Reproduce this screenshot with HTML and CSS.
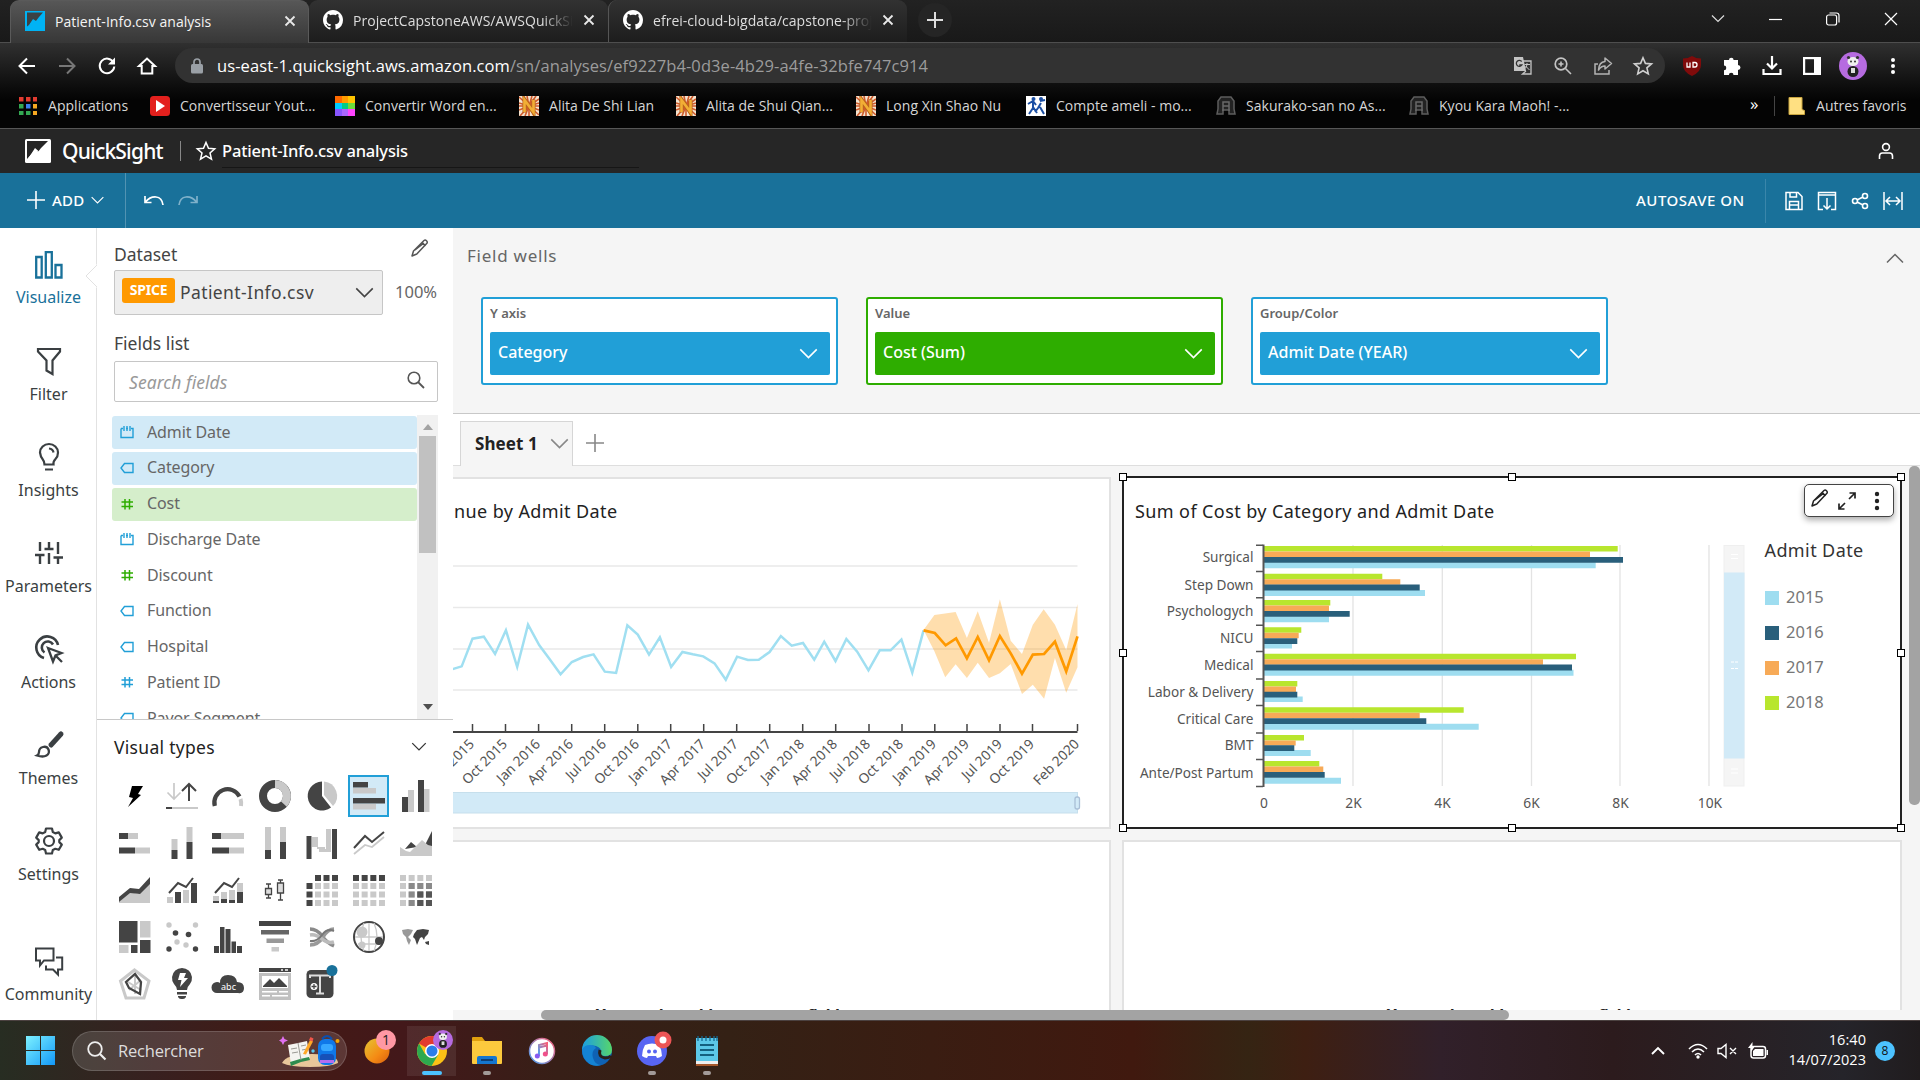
FILE: index.html
```html
<!DOCTYPE html>
<html lang="en">
<head>
<meta charset="utf-8">
<title>Patient-Info.csv analysis</title>
<link rel="stylesheet" href="styles.css">
</head>
<body>
<svg class="sprite" width="0" height="0" aria-hidden="true">
  <symbol id="close" viewBox="0 0 12 12"><path d="M1.5 1.5l9 9M10.500 1.500l-9 9" fill="none" stroke="currentColor" stroke-width="1.8"/></symbol>
  <symbol id="github" viewBox="0 0 16 16"><path fill="#fff" d="M8 0C3.580 0 0 3.580 0 8c0 3.540 2.290 6.530 5.470 7.590.4.070.550-.170.550-.380 0-.190-.010-.820-.010-1.490-2.010.370-2.530-.490-2.690-.940-.090-.230-.480-.940-.820-1.130-.280-.150-.680-.520-.010-.530.630-.010 1.080.580 1.230.820.720 1.210 1.870.870 2.330.660.070-.520.280-.870.510-1.070-1.780-.2-3.640-.890-3.640-3.950 0-.870.310-1.590.820-2.150-.080-.2-.360-1.020.080-2.120 0 0 .670-.210 2.200.820.640-.180 1.320-.270 2-.270s1.360.090 2 .270c1.530-1.040 2.200-.820 2.200-.820.440 1.100.160 1.920.080 2.120.510.560.820 1.270.820 2.150 0 3.070-1.870 3.750-3.650 3.950.290.250.540.730.540 1.480 0 1.070-.010 1.930-.010 2.200 0 .210.150.460.550.380A8 8 0 0 0 16 8c0-4.420-3.580-8-8-8z"/></symbol>
  <symbol id="chev" viewBox="0 0 20 12"><path d="M1 1.500l9 9 9-9" fill="none" stroke="currentColor" stroke-width="1.700"/></symbol>
  <symbol id="pencil" viewBox="0 0 18 18"><path d="M1 17l1.500-5L13 1.500q1.200-1 2.500.2t.4 2.600L5.800 15 1 17zM11 3.500l3.500 3.500M4 11l9-7" fill="none" stroke="currentColor" stroke-width="1.500" stroke-linejoin="round"/></symbol>
  <symbol id="f-date" viewBox="0 0 14 14"><path d="M1 3.500h2M11 3.500h2V12.500H1V3.500M6 3.500h2M4 1v5M7 1v5M10 1v5" fill="none" stroke="currentColor" stroke-width="1.400"/></symbol>
  <symbol id="f-text" viewBox="0 0 14 14"><path d="M4.500 2.500H13v9H4.500L1 7z" fill="none" stroke="currentColor" stroke-width="1.400"/></symbol>
  <symbol id="f-num" viewBox="0 0 14 14"><path d="M5 2v10.500M9.500 2v10.500M1.500 5h11.500M1.500 9.500h11.500" fill="none" stroke="currentColor" stroke-width="1.500"/></symbol>
  <symbol id="novel" viewBox="0 0 20 20"><path fill="#f3e3cf" d="M0 0h20v20H0z"/><path stroke="#cf5a2c" stroke-width="1.600" d="M10 10L0 1M10 10L4 0M10 10L8 0M10 10l3-10M10 10l7-10M10 10L20 3M10 10L0 7M10 10H0M10 10L0 14M10 10L1 20M10 10L6 20M10 10v10M10 10l5 10M10 10l10 9M10 10l10 4M10 10h10M10 10l10-3"/><path d="M5.500 16.500v-13l9 13v-13" fill="none" stroke="#b7641a" stroke-width="4"/><path d="M5.500 16v-12l9 12v-12" fill="none" stroke="#f2ae35" stroke-width="2.600"/></symbol>
  <symbol id="anime" viewBox="0 0 20 20"><path d="M5 1h10l3 4v8l1 5h-6v-4H7v4H1l1-5V5z" fill="#222" stroke="#5d5d5d" stroke-width="1.500"/><path d="M7 15V6h6v9M7 10h6" fill="none" stroke="#686868" stroke-width="1.500"/></symbol>
  <symbol id="panda" viewBox="0 0 28 28"><circle cx="14" cy="14" r="14" fill="#b66be0"/><ellipse cx="14" cy="19.500" rx="5.500" ry="5.500" fill="#222"/><ellipse cx="14" cy="9.500" rx="5.500" ry="4.500" fill="#eee"/><circle cx="9.500" cy="5.500" r="1.600" fill="#333"/><circle cx="18.500" cy="5.500" r="1.600" fill="#333"/><circle cx="12" cy="9.500" r="1" fill="#333"/><circle cx="16" cy="9.500" r="1" fill="#333"/><path d="M12 16h4v5h-4z" fill="#ddd"/></symbol>
</svg>

<header class="browser">
  <div class="tabstrip">
    <div class="tab tab-active">
      <svg width="20" height="20"><path fill="#00b3f4" d="M0 0h20v20H0z"/><path fill="#3b4245" d="M2 1.500h16L14 6l-3 4-3-2-4 6-2 1.500z"/><path fill="#00b3f4" d="M4 15l4-6 2.500 2 5-5-4 7-3-1.500z"/></svg>
      <span class="tab-title">Patient-Info.csv analysis</span>
      <svg class="x" width="12" height="12"><use href="#close"/></svg>
    </div>
    <div class="tab">
      <svg width="20" height="20"><use href="#github"/></svg>
      <span class="tab-title faded">ProjectCapstoneAWS/AWSQuickSight</span>
      <svg class="x" width="12" height="12"><use href="#close"/></svg>
    </div>
    <div class="tab tab-sep">
      <svg width="20" height="20"><use href="#github"/></svg>
      <span class="tab-title faded">efrei-cloud-bigdata/capstone-project</span>
      <svg class="x" width="12" height="12"><use href="#close"/></svg>
    </div>
    <div class="newtab"><svg width="16" height="16"><path d="M8 0v16M0 8h16" stroke="#ddd" stroke-width="2"/></svg></div>
    <div class="winctl">
      <svg width="14" height="10"><path d="M1 1.500l6 6 6-6" fill="none" stroke="#ddd" stroke-width="1.200"/></svg>
      <svg width="13" height="10"><path d="M0 5.500h13" stroke="#fff" stroke-width="1.200"/></svg>
      <svg width="14" height="14"><rect x=".6" y="3" width="10" height="10" rx="2" fill="none" stroke="#fff" stroke-width="1.200"/><path d="M3.500 1h7q2.500 0 2.500 2.500v7" fill="none" stroke="#fff" stroke-width="1.200"/></svg>
      <svg width="14" height="14"><path d="M1 1l12 12M13 1L1 13" stroke="#fff" stroke-width="1.200"/></svg>
    </div>
  </div>
  <div class="navbar">
    <div class="navbtns">
      <svg width="18" height="18"><path d="M17 9H2M9 1.500L1.500 9 9 16.500" fill="none" stroke="#fff" stroke-width="2"/></svg>
      <svg width="18" height="18"><path d="M1 9h15M9 1.500L16.500 9 9 16.500" fill="none" stroke="#777" stroke-width="2"/></svg>
      <svg width="18" height="18"><path d="M15.500 5.500A7.300 7.300 0 1 0 16.300 9.500" fill="none" stroke="#fff" stroke-width="2"/><path d="M17 .5v7h-7z" fill="#fff"/></svg>
      <svg width="18" height="18"><path d="M1 9l8-7.500L17 9h-2.700v7.500H3.700V9z" fill="none" stroke="#fff" stroke-width="2"/></svg>
    </div>
    <div class="omnibox">
      <svg width="12" height="16"><rect x="0" y="6" width="12" height="9.500" rx="1.500" fill="#9aa0a6"/><path d="M3 6.500V4a3 3 0 0 1 6 0v2.500" fill="none" stroke="#9aa0a6" stroke-width="1.700"/></svg>
      <p class="url">us-east-1.quicksight.aws.amazon.com<span>/sn/analyses/ef9227b4-0d3e-4b29-a4fe-32bfe747c914</span></p>
      <div class="omni-icons">
        <svg width="20" height="20"><path d="M1 1h9l3 14H1z" fill="#c4c4c4"/><path d="M10 5h8v13H9.500l3.500-3" fill="none" stroke="#c4c4c4" stroke-width="1.300"/><path d="M8.700 5.500a3 3 0 1 0 .2 3.500H6.300" fill="none" stroke="#333" stroke-width="1.300"/><path d="M11.500 8.500H17M14 7v1.500q-.5 3-2 4M12.500 10l4 4" stroke="#c4c4c4" fill="none"/></svg>
        <svg width="20" height="20"><circle cx="8" cy="8" r="5.800" fill="none" stroke="#c4c4c4" stroke-width="1.700"/><path d="M12.500 12.500L18 18M8 5.500v5M5.500 8h5" stroke="#c4c4c4" stroke-width="1.600"/></svg>
        <svg width="20" height="20"><path d="M5 8H2v10h14v-4" fill="none" stroke="#b4b4b4" stroke-width="1.500"/><path d="M12 2l6.500 5.500L12 13v-3q-4 0-6.500 4Q6 6 12 5.500z" fill="none" stroke="#b4b4b4" stroke-width="1.500" stroke-linejoin="round"/></svg>
        <svg width="20" height="20"><path d="M10 1.800l2.400 5.600 6.100.5-4.600 4 1.400 6L10 14.700 4.700 17.900l1.400-6-4.600-4 6.100-.5z" fill="none" stroke="#d0d0d0" stroke-width="1.600"/></svg>
      </div>
    </div>
    <div class="ext">
      <svg width="20" height="20"><path d="M10 0q4 2.500 9 2.500V9q0 7-9 11Q1 16 1 9V2.500Q6 2.500 10 0z" fill="#800b0b"/><path d="M5 6.500v4.500h3V6.500M11 6.500h2q2 0 2 2.200T13 11h-2z" fill="none" stroke="#fff" stroke-width="1.300"/></svg>
      <svg width="20" height="20"><path d="M7 4a2.300 2.300 0 0 1 4.600 0H16v5a2.400 2.400 0 0 1 0 5v5h-4.500a2.300 2.300 0 0 0-4.600 0H2v-4.800a2.300 2.300 0 0 0 0-4.600V4z" fill="#fff"/></svg>
      <svg width="20" height="20"><path d="M10 0v12M5 7.500l5 5 5-5M1.500 13v5h17v-5" fill="none" stroke="#fff" stroke-width="2.200"/></svg>
      <svg width="20" height="20"><rect x="2.100" y="2.100" width="15.800" height="15.800" fill="none" stroke="#fff" stroke-width="2.200"/><path fill="#fff" d="M12 2h6v16h-6z"/></svg>
      <svg width="28" height="28"><use href="#panda"/></svg>
      <svg width="20" height="20"><g fill="#fff"><circle cx="9" cy="4" r="2"/><circle cx="9" cy="10" r="2"/><circle cx="9" cy="16" r="2"/></g></svg>
    </div>
  </div>
  <nav class="bookmarks">
    <a><svg width="20" height="20"><path fill="#e23b30" d="M1 1h4.500v4.500H1zM8 1h4.500v4.500H8zM15 1h4v4.500h-4z"/><path fill="#33a852" d="M1 8h4.500v4.500H1zM1 15h4.500v4H1zM8 15h4.500v4H8z"/><path fill="#3a7ff0" d="M8 8h4.500v4.500H8z"/><path fill="#f6a821" d="M15 8h4v4.500h-4zM15 15h4v4h-4z"/></svg>Applications</a>
    <a><svg width="20" height="20"><rect width="20" height="20" rx="3.500" fill="#e3201d"/><path fill="#fff" d="M6 4l9 6-9 6z"/></svg>Convertisseur Yout...</a>
    <a><svg width="20" height="20"><path fill="#ff6a00" d="M0 0h7v7H0z"/><path fill="#ff9b00" d="M7 0h6v7H7z"/><path fill="#ffc400" d="M13 0h7v7h-7z"/><path fill="#0cf" d="M0 7h7v6H0z"/><path fill="#0c8" d="M7 7h6v6H7z"/><path fill="#6bdc3c" d="M13 7h7v6h-7z"/><path fill="#85f" d="M0 13h7v7H0z"/><path fill="#a6f" d="M7 13h6v7H7z"/><path fill="#f4f" d="M13 13h7v7h-7z"/></svg>Convertir Word en...</a>
    <a><svg width="20" height="20"><use href="#novel"/></svg>Alita De Shi Lian</a>
    <a><svg width="20" height="20"><use href="#novel"/></svg>Alita de Shui Qian...</a>
    <a><svg width="20" height="20"><use href="#novel"/></svg>Long Xin Shao Nu</a>
    <a><svg width="20" height="20"><path fill="#fff" d="M0 0h20v20H0z"/><g fill="none" stroke="#1c4fa3" stroke-width="2"><path d="M2 8l5-3 3 4M7 6v6l-4 6M7 11l4 6M14 5l5-1M15 7l-3 5-3 4M14 11l4 7"/></g><circle cx="7.500" cy="3" r="2" fill="#1c4fa3"/><circle cx="15" cy="3" r="2" fill="#1c4fa3"/></svg>Compte ameli - mo...</a>
    <a><svg width="20" height="20"><use href="#anime"/></svg>Sakurako-san no As...</a>
    <a><svg width="20" height="20"><use href="#anime"/></svg>Kyou Kara Maoh! -...</a>
    <span class="more">»</span>
    <a class="others"><svg width="18" height="20"><path d="M1 1.500h13v12l2.500 1V18.500H1z" fill="#ffe082" stroke="#c9a53f" stroke-width="1"/></svg>Autres favoris</a>
  </nav>
</header>

<div class="qs-head">
  <svg width="26" height="24"><rect width="26" height="24" rx="1.500" fill="#fff"/><path d="M2 2h21L16 9l-3 4-3-2-8 9z" fill="#262626"/><path d="M3 20l7-11 4 3.500L24 2l-7 14-4-3.500z" fill="#fff"/></svg>
  <strong class="brand">QuickSight</strong>
  <i class="rule"></i>
  <svg width="20" height="20"><path d="M10 1.500l2.500 5.800 6.200.5-4.700 4.100 1.500 6.200L10 14.800l-5.500 3.300L6 11.900 1.300 7.800l6.200-.5z" fill="none" stroke="#fff" stroke-width="1.500"/></svg>
  <h1>Patient-Info.csv analysis</h1>
  <svg class="user" width="16" height="18"><circle cx="8" cy="5" r="3.400" fill="none" stroke="#fff" stroke-width="1.600"/><path d="M1.500 17v-3q0-3 3-3h7q3 0 3 3v3" fill="none" stroke="#fff" stroke-width="1.600"/></svg>
</div>

<div class="qs-bar">
  <button class="add"><svg width="18" height="18"><path d="M9 0v18M0 9h18" stroke="#fff" stroke-width="1.600"/></svg><span>ADD</span><svg width="13" height="8"><use href="#chev"/></svg></button>
  <div class="history">
    <svg width="20" height="12"><path d="M1 1v6.500h6.500M1.500 7Q6 1.500 12 2t7 8" fill="none" stroke="#fff" stroke-width="1.700"/></svg>
    <svg width="20" height="12"><path d="M19 1v6.500h-6.500M18.500 7Q14 1.500 8 2T1 10" fill="none" stroke="#7fb1ca" stroke-width="1.700"/></svg>
  </div>
  <span class="autosave">AUTOSAVE ON</span>
  <div class="bar-icons">
    <svg width="20" height="20"><path d="M2 1.500h12l4 4v13H2zM6 1.500V6h6.500V1.500M5.500 18.500v-8h9v8M5.500 14h9" fill="none" stroke="#fff" stroke-width="1.500"/></svg>
    <svg width="20" height="20"><path d="M6 18.500H1.500v-17h17v17H14M1.500 4h17M10 7v11M6.500 14.500L10 18l3.500-3.500" fill="none" stroke="#fff" stroke-width="1.500"/></svg>
    <svg width="20" height="20"><g fill="none" stroke="#fff" stroke-width="1.600"><circle cx="5" cy="10" r="2.500"/><circle cx="15" cy="5" r="2.500"/><circle cx="15" cy="15" r="2.500"/><path d="M7 9l6-3M7 11l6 3"/></g></svg>
    <svg width="20" height="20"><path d="M1 1v18M19 1v18M3 10h14M7 6l-4 4 4 4M13 6l4 4-4 4" fill="none" stroke="#fff" stroke-width="1.500"/></svg>
  </div>
</div>

<main class="app">
  <nav class="rail">
    <a class="on"><svg width="28" height="28"><path d="M1.200 6h5.500v20.500H1.200zM10.800 1.200h6v25.300h-6zM20.500 14h6v12.500h-6z" fill="none" stroke="currentColor" stroke-width="2.300"/></svg>Visualize<svg class="notch" width="12" height="24"><path d="M12 0v24L1 12z" fill="#fff"/><path d="M12 1L1 12l11 11" fill="none" stroke="#e2e2e2"/></svg></a>
    <a><svg width="28" height="28"><path d="M3 2h22v2.500l-7.500 9V27l-6-3.500V13.500L3 4.500z" fill="none" stroke="currentColor" stroke-width="2.200"/></svg>Filter</a>
    <a><svg width="28" height="28"><path d="M9.500 21.500q0-3-2-5.500T5 9.500a9 8.500 0 0 1 18 0q0 4-2.500 6.500t-2 5.500zM10 26.500h8M14 5.500q4 .5 4.500 4" fill="none" stroke="currentColor" stroke-width="2.200"/></svg>Insights</a>
    <a><svg width="28" height="28"><path d="M5 3v9M0 16h9.500M5 16v9M14 3v7M9.500 10h9M14 14v11M23 3v12M18.500 18.500H28M23 18.500V25" fill="none" stroke="currentColor" stroke-width="2.400"/></svg>Parameters</a>
    <a><svg width="28" height="28"><path d="M9 23A11 11 0 1 1 23 10M9.500 17.500A6 6 0 1 1 18 9.500" fill="none" stroke="currentColor" stroke-width="2.600"/><path d="M13 13l13.500 5-6 2.500L18 26.500zM20 20l7 7" fill="none" stroke="currentColor" stroke-width="2.300"/></svg>Actions</a>
    <a><svg width="28" height="28"><path d="M26 3L16 14" stroke="currentColor" stroke-width="5" stroke-linecap="round"/><path d="M2 24.500q2-1 2-3.500 0-4 4-5t5.500 2.500q1.500 4-2 6T2 24.500z" fill="none" stroke="currentColor" stroke-width="2.300"/></svg>Themes</a>
    <a><svg width="28" height="28"><g fill="none" stroke="currentColor" stroke-width="2.200" stroke-linejoin="round"><circle cx="14" cy="14" r="5"/><path d="M11 1.500h6l.8 3.500 2.500 1.400 3.500-1 3 5.200-2.500 2.500v2l2.500 2.500-3 5.200-3.500-1L17.800 23l-.8 3.500h-6L10.200 23l-2.500-1.200-3.500 1-3-5.200 2.500-2.500v-2L1.200 10.600l3-5.200 3.500 1L10.200 5z"/></g></svg>Settings</a>
    <a><svg width="28" height="28"><path d="M1 1.500h17.500v12H9l-4 5v-5H1zM21 10.500h6.200v12H23v5l-5-5h-7v-4" fill="none" stroke="currentColor" stroke-width="2"/></svg>Community</a>
  </nav>

  <section class="panel">
    <div class="panel-top">
      <div class="row-head"><h2>Dataset</h2><svg width="18" height="18"><use href="#pencil"/></svg></div>
      <div class="row-data">
        <div class="select"><b>SPICE</b><span>Patient-Info.csv</span><svg width="19" height="11"><use href="#chev"/></svg></div>
        <em>100%</em>
      </div>
      <h2 class="fl">Fields list</h2>
      <div class="search"><span>Search fields</span><svg width="18" height="18"><circle cx="7" cy="7" r="5.800" fill="none" stroke="#555" stroke-width="1.600"/><path d="M11 11l6 6" stroke="#555" stroke-width="1.800"/></svg></div>
    </div>
    <div class="fields">
      <ul>
        <li class="dim"><svg width="14" height="14"><use href="#f-date"/></svg>Admit Date</li>
        <li class="dim"><svg width="14" height="14"><use href="#f-text"/></svg>Category</li>
        <li class="mea"><svg class="g" width="14" height="14"><use href="#f-num"/></svg>Cost</li>
        <li><svg width="14" height="14"><use href="#f-date"/></svg>Discharge Date</li>
        <li><svg class="g" width="14" height="14"><use href="#f-num"/></svg>Discount</li>
        <li><svg width="14" height="14"><use href="#f-text"/></svg>Function</li>
        <li><svg width="14" height="14"><use href="#f-text"/></svg>Hospital</li>
        <li><svg width="14" height="14"><use href="#f-num"/></svg>Patient ID</li>
        <li><svg width="14" height="14"><use href="#f-text"/></svg>Payor Segment</li>
      </ul>
      <div class="vscroll"><svg width="10" height="6"><path d="M5 0l5 6H0z" fill="#a3a3a3"/></svg><i></i><svg width="10" height="6"><path d="M0 0h10L5 6z" fill="#505050"/></svg></div>
    </div>
    <div class="vt-head"><h2>Visual types</h2><svg width="16" height="9"><use href="#chev"/></svg></div>
    <div class="types">
      <span><svg width="32" height="32"><path d="M13 6h11l-5 8 3 1L9 27l5-9-4-1z"/></svg></span>
      <span><svg width="32" height="32"><path d="M8 3v16M1.500 12.500L8 19l6.500-6.500" fill="none" stroke="#c9c9c9" stroke-width="1.700"/><path d="M23 21V4M16 11l7-7 7 7" fill="none" stroke="#444" stroke-width="2"/><path d="M0 28h6" stroke="#444" stroke-width="2"/><path d="M6 28h26" stroke="#c9c9c9" stroke-width="2"/></svg></span>
      <span><svg width="32" height="32"><path d="M28.500 19Q29.500 22 29 26" fill="none" stroke="#c9c9c9" stroke-width="4"/><path d="M2.800 26A13.300 13.300 0 0 1 27.500 16.500" fill="none" stroke="#444" stroke-width="4.200"/></svg></span>
      <span><svg width="32" height="32"><circle cx="16" cy="16" r="12" fill="none" stroke="#444" stroke-width="8"/><path d="M16 4a12 12 0 0 1 8.800 20" fill="none" stroke="#c9c9c9" stroke-width="8"/></svg></span>
      <span><svg width="32" height="32"><path d="M16 1.500A14.500 14.500 0 1 0 25 27.500L16 16z" fill="#444"/><path d="M18 1.500a14.500 14.500 0 0 1 9 24.500L18 15z" fill="#c9c9c9"/></svg></span>
      <span class="picked"><svg width="32" height="32"><path d="M0 2h15v5.500H0zM0 18h32v5.500H0z" fill="#444"/><path d="M0 8h23v5.500H0zM0 24h23v5.500H0z" fill="#c9c9c9"/></svg></span>
      <span><svg width="32" height="32"><path d="M2 17h6v15H2zM18 0h6v32h-6z" fill="#444"/><path d="M8 10h6v22H8zM24 9h5.500v23H24z" fill="#c9c9c9"/></svg></span>

      <span><svg width="32" height="32"><path d="M0 6h9v6H0zM0 20.500h16v6H0z" fill="#444"/><path d="M9 6h10v6H9zM16 20.500h15v6H16z" fill="#c9c9c9"/></svg></span>
      <span><svg width="32" height="32"><path d="M5.500 23h6v9h-6zM20.500 15h6v17h-6z" fill="#444"/><path d="M5.500 12h6v11h-6zM20.500 0h6v15h-6z" fill="#c9c9c9"/></svg></span>
      <span><svg width="32" height="32"><path d="M0 6h9v6H0zM0 20.500h17v6H0z" fill="#444"/><path d="M9 6h23v6H9zM17 20.500h15v6H17z" fill="#c9c9c9"/></svg></span>
      <span><svg width="32" height="32"><path d="M6 23h6v9H6zM21 15h6v17h-6z" fill="#444"/><path d="M6 0h6v23H6zM21 0h6v15h-6z" fill="#c9c9c9"/></svg></span>
      <span><svg width="32" height="32"><path d="M.5 9h5v23h-5zM26 2h5v30h-5z" fill="#444"/><path d="M6 10h6v10H6zM11 20h5v2h-5zM13 20h6v5h-6zM20 2h5v23h-6v-3h1z" fill="#c9c9c9"/></svg></span>
      <span><svg width="32" height="32"><path d="M1 27l11-9 7 2L31 10" fill="none" stroke="#c9c9c9" stroke-width="1.800"/><path d="M1 21L12 9l7 6L31 5" fill="none" stroke="#444" stroke-width="2"/></svg></span>
      <span><svg width="32" height="32"><path d="M5 22l6-7 6 5zM24 20l8-16v20z" fill="#444"/><path d="M0 20l6 4 4 1 12-12 6 5 4 1v10H0z" fill="#c9c9c9"/></svg></span>

      <span><svg width="32" height="32"><path d="M0 28l11-10 8 2L31 8v21H0z" fill="#c9c9c9"/><path d="M0 23l11-9 9 1L31 3v7L21 20l-10-1L0 28z" fill="#444"/></svg></span>
      <span><svg width="32" height="32"><path d="M1 23h6v6H1zM17 16h6v13h-6z" fill="#c9c9c9"/><path d="M9 18h6v11H9zM25 9h6v20h-6z" fill="#444"/><path d="M3 19l9-10 8 4 7-9" fill="none" stroke="#444" stroke-width="2"/></svg></span>
      <span><svg width="32" height="32"><path d="M1 22h6v7H1zM9 18h6v11H9zM17 16h6v13h-6zM25 9h6v20h-6z" fill="#c9c9c9"/><path d="M1 27h6v2H1zM9 25h6v4H9zM17 26h6v3h-6zM25 18h6v11h-6z" fill="#444"/><path d="M3 19l9-10 8 4 7-9" fill="none" stroke="#444" stroke-width="2"/></svg></span>
      <span><svg width="32" height="32"><g fill="#ddd" stroke="#444" stroke-width="1.300"><path d="M9.500 10v14M7 10h5M7 24h5M21.500 6v20M19 6h5M19 26h5"/><path d="M6.500 14.500h6v6h-6zM18.500 9h6v10h-6z"/></g></svg></span>
      <span><svg width="32" height="32"><path d="M9 4h23" stroke="#444" stroke-width="6" stroke-dasharray="6 2.500"/><path d="M3.500 9v23" stroke="#444" stroke-width="6" stroke-dasharray="6 2.500"/><path d="M9 12h23M9 20.500h23M9 29h23" stroke="#c9c9c9" stroke-width="6" stroke-dasharray="6 2.500"/></svg></span>
      <span><svg width="32" height="32"><path d="M0 4h32" stroke="#444" stroke-width="6" stroke-dasharray="6 2.660"/><path d="M0 12h32M0 20.500h32M0 29h32" stroke="#c9c9c9" stroke-width="6" stroke-dasharray="6 2.660"/></svg></span>
      <span><svg width="32" height="32"><g stroke-width="6" stroke-dasharray="6 2.660"><path d="M0 4h32M0 12h32M0 20.500h32M0 29h32" stroke="#c9c9c9"/><path d="M8.660 12H32M8.660 20.500H32M8.660 29H32" stroke="#8a8a8a"/><path d="M17.300 20.500H32M17.300 29H32" stroke="#555"/></g></svg></span>

      <span><svg width="32" height="32"><path d="M0 0h18.500v21.500H0zM21 19h10.500v13H21zM12 24h6.500v8H12z" fill="#444"/><path d="M21 0h10.500v16.500H21zM0 24h9.500v8H0z" fill="#c9c9c9"/></svg></span>
      <span><svg width="32" height="32"><g fill="#c9c9c9"><circle cx="3" cy="4" r="2.700"/><circle cx="29.500" cy="4" r="2.700"/><circle cx="11" cy="21" r="2.700"/><circle cx="20" cy="24" r="2.700"/></g><g fill="#444"><circle cx="9.500" cy="12" r="2.800"/><circle cx="22.500" cy="13.500" r="2.800"/><circle cx="3" cy="28" r="2.700"/><circle cx="29.500" cy="28" r="2.700"/></g></svg></span>
      <span><svg width="32" height="32"><path d="M2 25h5v7H2zM8 6h4.500v26H8zM13.500 8h5v24h-5zM19.500 20.500h4.500V32h-4.500zM25 25h5v7h-5z" fill="#444"/></svg></span>
      <span><svg width="32" height="32"><path d="M0 0h32v5H0z" fill="#444"/><path d="M2 9h28v4.500H2z" fill="#666"/><path d="M7.500 17.500H25V22H7.500z" fill="#999"/><path d="M12.500 26H20v4.500h-7.500z" fill="#c9c9c9"/></svg></span>
      <span><svg width="32" height="32"><g fill="none" stroke-width="3.500"><path d="M4 8q7 0 12 7t12 10" stroke="#8a8a8a"/><path d="M4 24q8 0 13-8T28 8" stroke="#999"/><path d="M4 14q6-1 12 4t12 3" stroke="#bbb"/><path d="M4 20q7 1 12-6t12-4" stroke="#777" stroke-width="2"/></g></svg></span>
      <span><svg width="32" height="32"><circle cx="16" cy="16" r="15" fill="none" stroke="#444" stroke-width="2"/><path d="M2 16h28M16 2v28M5 23h22M21 2q6 14 0 28M11 2q-6 14 0 28" fill="none" stroke="#c9c9c9" stroke-width="1.300"/><circle cx="9" cy="11" r="5.500" fill="#c9c9c9"/><circle cx="9" cy="24" r="3.500" fill="#c9c9c9"/><circle cx="26" cy="20" r="4" fill="#444"/></svg></span>
      <span><svg width="32" height="32"><path d="M2 9l6-1 5 1-2 4-3 3 3 3-2 5-2-4-1-4-3-3z" fill="#999"/><path d="M14 13l3-4 6-1 6 1-1 4-3 3-1 3-2-3-2 1-3 7-2-6-2-2z" fill="#444"/><path d="M25 21l4-1v4l-3-1z" fill="#444"/></svg></span>

      <span><svg width="32" height="32"><path d="M15.500 2L30 13l-5 17H7L1.500 13z" fill="none" stroke="#c9c9c9" stroke-width="3"/><path d="M16 8v18M9 14l13 8M22 12L10 22" stroke="#c9c9c9" stroke-width="2"/><path d="M16 6l6 8-1 12-11-6-3-6z" fill="none" stroke="#444" stroke-width="2.300"/></svg></span>
      <span><svg width="32" height="32"><path d="M11 22q0-3-3-6a10 10 0 1 1 16 0q-3 3-3 6zM11 24h10v2.500H11zM12 28h8v1q-1 2-3 2h-2q-2 0-3-2z" fill="#444"/><path d="M14 5h6l-2 5h4l-8 9 1.500-7H12z" fill="#fff"/></svg></span>
      <span><svg width="32" height="32"><path d="M5 25a5.500 5.500 0 0 1 0-11q2 0 3 1 0-8 8-8t9 7q7 0 7 6t-6 5z" fill="#444"/><text x="16.500" y="21.500" text-anchor="middle" font-size="9" fill="#fff">abc</text></svg></span>
      <span><svg width="32" height="32"><path d="M0 0h32v4H0z" fill="#444"/><path d="M0 5h32v27H0z" fill="#c0c0c0"/><path d="M3 8h26v12H3zM3 23h15v1.500H3zM20 23h9v1.500h-9zM3 27h8v1.500H3zM13 27h16v1.500H13z" fill="#fff"/><path d="M4 18l7-7 4 4 5-5 8 8v1H4z" fill="#444"/><path d="M22 1h2v2h-2zM26 1h3v2h-3z" fill="#c9c9c9"/></svg></span>
      <span><svg width="32" height="32"><rect x=".5" y="2" width="27" height="28" rx="4.500" fill="#444"/><path d="M4 10V7.500h20V10M14 7.500v18M10 25.500h8" fill="none" stroke="#ddd" stroke-width="2"/><circle cx="8" cy="18.500" r="3.500" fill="#fff"/><path d="M8 16v5M5.500 18.500h5" stroke="#444" stroke-width="1.300"/><circle cx="26" cy="2.500" r="5.500" fill="#19719a"/></svg></span>
    </div>
  </section>

  <section class="stage">
    <div class="wells">
      <div class="wells-head"><h2>Field wells</h2><svg width="18" height="10"><path d="M1 9.500l8-8 8 8" fill="none" stroke="#666" stroke-width="1.500"/></svg></div>
      <div class="wells-row">
        <div class="well"><label>Y axis</label><p>Category<svg width="19" height="11"><use href="#chev"/></svg></p></div>
        <div class="well green"><label>Value</label><p>Cost (Sum)<svg width="19" height="11"><use href="#chev"/></svg></p></div>
        <div class="well"><label>Group/Color</label><p>Admit Date (YEAR)<svg width="19" height="11"><use href="#chev"/></svg></p></div>
      </div>
    </div>
    <div class="sheets">
      <div class="sheet"><b>Sheet 1</b><svg width="19" height="11"><use href="#chev"/></svg></div>
      <svg width="18" height="18"><path d="M9 0v18M0 9h18" stroke="#888" stroke-width="1.600"/></svg>
    </div>
    <div class="board-wrap">
      <div class="board">
        <article class="visual left">
          <h3>nue by Admit Date</h3>
          <svg class="chart" width="656" height="297" viewBox="453 530 656 297">
            <path d="M453 566h624.500M453 607.500h624.500M453 649h624.500M453 690h624.500" stroke="#e9e9e9" stroke-width="1.500"/>
            <g transform="translate(440 460) scale(.43367 .33333)" fill="none">
              <path d="M1115 510L1140 465 1189 456 1215 534 1240 454 1266 548 1291 418 1316 542 1342 582 1367 494 1392 448 1418 494 1444 570 1470 432V622L1444 698 1418 594 1393 716 1367 674 1342 702 1316 612 1291 640 1266 654 1240 608 1215 654 1189 613 1165 652 1140 574z" fill="#ff9900" fill-opacity=".32"/>
              <path vector-effect="non-scaling-stroke" stroke="#a0dff1" stroke-width="2.500" d="M20 631L50 619 75 536 101 530 127 582 152 511 178 621 203 494 229 556 253 598 278 643 304 606 330 591 354 583 380 635 406 639 432 496 456 524 482 584 507 532 533 621 559 576 583 583 607 589 633 610 659 659 685 590 710 600 735 599 760 576 786 528 811 557 837 549 863 599 886 545 912 603 937 537 962 575 988 631 1014 571 1039 571 1064 539 1089 638 1115 511"/>
              <path vector-effect="non-scaling-stroke" stroke="#ff9900" stroke-width="2.700" d="M1115 511L1141 519 1166 556 1190 535 1215 595 1240 531 1266 601 1291 528 1316 580 1342 641 1367 584 1393 582 1418 545 1444 634 1470 529"/>
            </g>
            <path d="M453 732h624.500" stroke="#444" stroke-width="2"/>
            <path stroke="#444" stroke-width="1.500" d="M472.500 724v7M505.500 724v7M538.600 724v7M571.700 724v7M604.700 724v7M637.800 724v7M670.700 724v7M703.700 724v7M736.700 724v7M769.700 724v7M802.700 724v7M835.700 724v7M869 724v7M902 724v7M934.800 724v7M967 724v7M1000 724v7M1032.500 724v7M1077.500 724v7"/>
            <g class="ticks">
              <text transform="translate(475 745) rotate(-45)">Jul 2015</text>
              <text transform="translate(508 745) rotate(-45)">Oct 2015</text>
              <text transform="translate(541 745) rotate(-45)">Jan 2016</text>
              <text transform="translate(574 745) rotate(-45)">Apr 2016</text>
              <text transform="translate(607 745) rotate(-45)">Jul 2016</text>
              <text transform="translate(640 745) rotate(-45)">Oct 2016</text>
              <text transform="translate(673 745) rotate(-45)">Jan 2017</text>
              <text transform="translate(706 745) rotate(-45)">Apr 2017</text>
              <text transform="translate(739 745) rotate(-45)">Jul 2017</text>
              <text transform="translate(772 745) rotate(-45)">Oct 2017</text>
              <text transform="translate(805 745) rotate(-45)">Jan 2018</text>
              <text transform="translate(838 745) rotate(-45)">Apr 2018</text>
              <text transform="translate(871 745) rotate(-45)">Jul 2018</text>
              <text transform="translate(904 745) rotate(-45)">Oct 2018</text>
              <text transform="translate(937 745) rotate(-45)">Jan 2019</text>
              <text transform="translate(970 745) rotate(-45)">Apr 2019</text>
              <text transform="translate(1003 745) rotate(-45)">Jul 2019</text>
              <text transform="translate(1035 745) rotate(-45)">Oct 2019</text>
              <text transform="translate(1080 745) rotate(-45)">Feb 2020</text>
            </g>
            <rect x="450" y="792.500" width="627.500" height="20.500" fill="#d2eaf7" stroke="#c6dfec"/>
            <rect x="1075" y="797" width="4.500" height="12" rx="2" fill="#d2eaf7" stroke="#a9bfd6" stroke-width="1.300"/>
          </svg>
        </article>
        <article class="visual selected">
          <h3>Sum of Cost by Category and Admit Date</h3>
          <svg class="chart" width="776" height="297" viewBox="1124 530 776 297">
            <path d="M1353 545v241M1442.300 545v241M1531.500 545v241M1620 545v241M1709 545v241" stroke="#e3e3e3" stroke-width="1.300"/>
            <g fill="#b8e62e"><path d="M1264 546h353.700v5.500H1264zM1264 573.700h118.300v5.500H1264zM1264 600h66.300v5.500H1264zM1264 627.300h37.300v5.500H1264zM1264 653.700h312v5.500H1264zM1264 681h33.300v5.500H1264zM1264 707.300h199.700v5.500H1264zM1264 735h40v5.500H1264zM1264 761h55.300v5.500H1264z"/></g>
            <g fill="#f7aa57"><path d="M1264 551.500h326v5.500H1264zM1264 579.200h136.300v5.500H1264zM1264 605.500h65v5.500H1264zM1264 632.800h34.700v5.500H1264zM1264 659.200h279v5.500H1264zM1264 686.500h32v5.500H1264zM1264 712.800h155.700v5.500H1264zM1264 740.500h31.700v5H1264zM1264 766.500h59.300v5.500H1264z"/></g>
            <g fill="#9eddf0"><path d="M1264 562.300h331.700v6H1264zM1264 590h161v6H1264zM1264 616.300h65v6H1264zM1264 643h28v5.500H1264zM1264 669.700h309.500v6H1264zM1264 696.500h38.700v5.500H1264zM1264 723.700h214.700v6H1264zM1264 750h46.700v6H1264zM1264 777.700h77v6H1264z"/></g>
            <g fill="#295f7b"><path d="M1264 557h359v5.800H1264zM1264 584.600h155.700v5.800H1264zM1264 611h85.700v5.800H1264zM1264 638.300h33.300v5.600H1264zM1264 664.600h308v5.800H1264zM1264 691.800h33.300v5.600H1264zM1264 718.300h162.300v5.800H1264zM1264 745.300h30.300v5.600H1264zM1264 772h60.700v5.800H1264z"/></g>
            <path d="M1263.500 544.500v242.500" stroke="#555" stroke-width="2"/>
            <path d="M1256 545.300h7M1256 571.600h7M1256 597.700h7M1256 625.300h7M1256 651.600h7M1256 679h7M1256 705.500h7M1256 733h7M1256 759.500h7M1256 786.500h7" stroke="#555" stroke-width="1.500"/>
            <g class="cats">
              <text x="1253.500" y="562">Surgical</text><text x="1253.500" y="590">Step Down</text><text x="1253.500" y="616">Psychologych</text><text x="1253.500" y="643">NICU</text><text x="1253.500" y="670">Medical</text><text x="1253.500" y="697">Labor &amp; Delivery</text><text x="1253.500" y="723.500">Critical Care</text><text x="1253.500" y="750">BMT</text><text x="1253.500" y="777.500">Ante/Post Partum</text>
            </g>
            <g class="vals"><text x="1264" y="808">0</text><text x="1353.500" y="808">2K</text><text x="1442.500" y="808">4K</text><text x="1531.500" y="808">6K</text><text x="1620.500" y="808">8K</text><text x="1710" y="808">10K</text></g>
            <rect x="1724" y="545.500" width="20" height="240.500" fill="#f5f5f5" stroke="#efefef"/>
            <path fill="#d2eaf7" d="M1724 572.500h20.500v186h-20.500z"/>
            <path d="M1731 554.500h7M1731 558.500h7M1731 769h7M1731 773h7" stroke="#fff" stroke-width="1.200"/><path d="M1731 662h7M1731 668.500h7" stroke="#fff" stroke-dasharray="3 1"/>
            <text class="lg-title" x="1764.500" y="557">Admit Date</text>
            <path fill="#9eddf0" d="M1765 591h14v14h-14z"/><path fill="#295f7b" d="M1765 626h14v14h-14z"/><path fill="#f7aa57" d="M1765 661h14v14h-14z"/><path fill="#b8e62e" d="M1765 696h14v14h-14z"/>
            <g class="lg"><text x="1786" y="603">2015</text><text x="1786" y="638">2016</text><text x="1786" y="673">2017</text><text x="1786" y="708">2018</text></g>
          </svg>
          <div class="tools">
            <svg width="18" height="18"><use href="#pencil"/></svg>
            <svg width="18" height="18"><path d="M11 7l6-6M11.500 1H17v5.500M7 11l-6 6M1 11.500V17h5.500" fill="none" stroke="#222" stroke-width="1.700"/></svg>
            <svg width="18" height="20"><g fill="#222"><circle cx="10" cy="3" r="2.200"/><circle cx="10" cy="10" r="2.200"/><circle cx="10" cy="17" r="2.200"/></g></svg>
          </div>
          <i class="h tl"></i><i class="h tc"></i><i class="h tr"></i><i class="h ml"></i><i class="h mr"></i><i class="h bl"></i><i class="h bc"></i><i class="h br"></i>
        </article>
        <article class="visual left empty"><p>You need to add one or more fields</p></article>
        <article class="visual empty"><p>You need to add one or more fields</p></article>
      </div>
      <div class="side"><i></i></div>
      <div class="foot"><i></i></div>
    </div>
  </section>
</main>

<footer class="taskbar">
  <svg class="start" width="29" height="29"><defs><linearGradient id="w" x1="0" y1="0" x2="1" y2="1"><stop offset="0" stop-color="#7df1ff"/><stop offset="1" stop-color="#1298f8"/></linearGradient></defs><path fill="url(#w)" d="M0 0h14v14H0zM15 0h14v14H15zM0 15h14v14H0zM15 15h14v14H15z"/></svg>
  <div class="tb-search">
    <svg width="20" height="20"><circle cx="8" cy="8" r="6.800" fill="none" stroke="#eee" stroke-width="1.800"/><path d="M13 13l5.500 5.500" stroke="#eee" stroke-width="2.200"/></svg>
    <span>Rechercher</span>
    <svg width="60" height="32"><path d="M2 28q4-9 30-9t26 9q-8 4-28 4T2 28z" fill="#e8c79a"/><path d="M8 10l10-2 9-2 3 17-9 2-10 4z" fill="#f4f4f0"/><path d="M10 27l10-3 9-2 1 3-9 2-10 4z" fill="#2e8b4e"/><path d="M18 8l3 17M11 14l6-1M12 18l6-1M21 11l5-1M22 15l5-1" stroke="#9a9a94"/><path d="M23 19l7-14 3 1.500-7 13z" fill="#ffa726"/><path d="M29 5l1.500-3 3 1.500-1 3z" fill="#f0564a"/><rect x="38" y="4" width="18" height="26" rx="7" fill="#0f78e8"/><path d="M42 4q5-6 10 0" fill="none" stroke="#0b4fae" stroke-width="2"/><rect x="41" y="9" width="12" height="7" rx="3" fill="#36a7ff"/><rect x="40" y="19" width="14" height="8" rx="3" fill="#1650b8"/><path d="M40 25h14v3H40z" fill="#b36ef0"/><path d="M3 1l1.500 3L8 5.500 4.500 7 3 10 1.500 7-1 5.500 1.500 4z" fill="#e070f0"/><circle cx="57.500" cy="6" r="2" fill="#f5a700"/><circle cx="33" cy="16" r="1.700" fill="#58c8f0"/></svg>
  </div>
  <div class="apps">
    <span><svg width="40" height="40"><defs><linearGradient id="o" x1="0" y1="0" x2="1" y2="1"><stop offset="0" stop-color="#e6c533"/><stop offset=".6" stop-color="#f48a14"/><stop offset="1" stop-color="#d95f0e"/></linearGradient></defs><circle cx="20" cy="20" r="12.500" fill="url(#o)"/><circle cx="29" cy="9" r="10" fill="#ff98a4"/><text x="29" y="14" font-size="14" text-anchor="middle" fill="#222">1</text></svg></span>
    <span class="cur"><svg width="40" height="40"><circle cx="20" cy="20" r="15" fill="#fbc116"/><path d="M20 20L7 12.500A15 15 0 0 1 33 12.500z" fill="#e33b2e"/><path d="M7 12.500A15 15 0 0 0 19.500 35L26 24 13 23z" fill="#2da94f"/><circle cx="20" cy="20" r="7" fill="#fff"/><circle cx="20" cy="20" r="5.500" fill="#2a7de9"/><svg x="21" y="-1" width="20" height="20"><use href="#panda"/></svg></svg></span>
    <span class="run"><svg width="32" height="32"><path d="M1 3q0-1 1-1h9l3 4h-13z" fill="#e0a00e"/><path d="M1 6h30v22q0 1-1 1H2q-1 0-1-1z" fill="#fcc93d"/><path d="M6 29v-6q0-2 2-2h16q2 0 2 2v6z" fill="#1576cf"/><path d="M10 25h12" stroke="#0c3f77" stroke-width="2"/></svg></span>
    <span><svg width="28" height="28"><defs><linearGradient id="m" x1="1" y1="0" x2="0" y2="1"><stop offset="0" stop-color="#fb5c74"/><stop offset="1" stop-color="#49a3f5"/></linearGradient></defs><circle cx="14" cy="14" r="12.500" fill="#fff" stroke="url(#m)" stroke-width="1.500"/><path d="M11 19V8l8-2v11M11 10.500l8-2" fill="none" stroke="url(#m)" stroke-width="2"/><circle cx="9.300" cy="19" r="2.500" fill="#8a5bf0"/><circle cx="17.300" cy="17" r="2.500" fill="#f0508a"/></svg></span>
    <span><svg width="30" height="30"><defs><linearGradient id="e" x1="0" y1="0" x2="1" y2="0"><stop offset="0" stop-color="#1b9de2"/><stop offset="1" stop-color="#57d66b"/></linearGradient></defs><circle cx="15" cy="15" r="15" fill="#0f62b4"/><path d="M0 14A15 15 0 0 1 30 14q0 6-7 6-5 0-4-3 1-5-5-7T0 14z" fill="url(#e)"/><path d="M0 14q2-5 8-5 5 0 6 3-5 3-3 10 2 7 8 7Q8 32 2 22 0 18 0 14z" fill="#1583d3"/><path d="M18 14q-2 7 5 8 4 0 6-2" fill="none" stroke="#2b2017" stroke-width="3"/></svg></span>
    <span class="run"><svg width="40" height="40"><circle cx="20" cy="20" r="15" fill="#5865f2"/><path d="M13 14q7-3 14 0 3 5 3 11-3 2-5 2l-1-2h-8l-1 2q-2 0-5-2 0-6 3-11z" fill="#fff"/><circle cx="17" cy="20.500" r="2" fill="#5865f2"/><circle cx="23" cy="20.500" r="2" fill="#5865f2"/><circle cx="31" cy="9" r="8.500" fill="#ed5555"/><circle cx="31" cy="9" r="3.500" fill="#fff"/></svg></span>
    <span class="run"><svg width="24" height="30"><path d="M1 2h22v26H1z" fill="#5cc8e8"/><path d="M1 25h22v3H1z" fill="#eee"/><path d="M1 28h22v2H1z" fill="#a5572a"/><path d="M3 0v5M7 0v5M11 0v5M15 0v5M19 0v5M22 0v5" stroke="#146a94" stroke-width="1.300"/><path d="M5 9h14M5 14h14M5 19h14" stroke="#14607f" stroke-width="2"/></svg></span>
  </div>
  <div class="tray">
    <svg width="14" height="9"><path d="M1 8l6-6 6 6" fill="none" stroke="#fff" stroke-width="1.900"/></svg>
    <svg width="20" height="16"><g fill="none" stroke="#fff" stroke-width="1.600"><path d="M1 6q9-9 18 0M4 9q6-6 12 0M7 12q3-3 6 0"/></g><circle cx="10" cy="14" r="1.700" fill="#fff"/></svg>
    <svg width="20" height="16"><path d="M1 5.500h3L9 1.500v13l-5-4H1zM13 5l6 6M19 5l-6 6" fill="none" stroke="#fff" stroke-width="1.400"/></svg>
    <svg width="21" height="18"><rect x="3" y="4.500" width="14.500" height="11.500" rx="2.500" fill="none" stroke="#fff" stroke-width="1.500"/><path d="M7 7h8.500v7H5V9zM18.500 8H20v5h-1.500z" fill="#fff"/><path d="M4.500 0v4H7L3 10V6H0z" fill="#fff"/></svg>
    <p>16:40<br>14/07/2023</p>
    <b>8</b>
  </div>
</footer>
</body>
</html>
```
FILE: styles.css
```css
* { box-sizing: border-box; }
body { margin: 0; width: 1920px; height: 1080px; overflow: hidden; font-family: "Noto Sans", "Open Sans", sans-serif; color: #333; background: #fff; }
svg { display: block; flex: none; overflow: visible; }
.sprite { position: absolute; }
h1, h2, h3, p, ul { margin: 0; padding: 0; font-weight: 400; }
span, a, p, h1, h2, h3, b, li, label { white-space: nowrap; }

/* browser chrome */
.browser { height: 129px; background: #040404; border-bottom: 1px solid #565656; color: #d6d6d6; font-family: "Open Sans", "Noto Sans", sans-serif; }
.tabstrip { height: 43px; display: flex; align-items: stretch; background: linear-gradient(#222, #191919); border-bottom: 1px solid #4e4e4e; padding-left: 10px; }
.tab { width: 299px; display: flex; align-items: center; gap: 10px; padding: 0 13px 2px 14px; background: linear-gradient(#323232, #1d1d1d); border-radius: 9px 9px 0 0; font-size: 14px; letter-spacing: .03px; color: #ddd; }
.tab-active { height: 43px; padding-right: 12px; background: linear-gradient(#575757, #373737); color: #f4f4f4; border: 1px solid #5a5a5a; border-bottom: 0; }
.tab-sep { border-left: 1px solid #555; }
.tab-title { flex: 1; overflow: hidden; }
.faded { -webkit-mask-image: linear-gradient(90deg, #000 86%, transparent); mask-image: linear-gradient(90deg, #000 86%, transparent); }
.x { color: #e8e8e8; }
.newtab { width: 34px; height: 34px; margin: 3px 0 0 11px; border-radius: 50%; background: #252525; display: grid; place-items: center; }
.winctl { margin-left: auto; height: 37px; display: flex; align-items: center; gap: 44px; padding-right: 22px; }
.navbar { height: 45px; display: flex; align-items: center; background: linear-gradient(#303030, #0c0c0c); }
.navbtns { display: flex; gap: 22px; width: 175px; padding-left: 18px; }
.omnibox { width: 1490px; height: 35px; border-radius: 18px; background: #323232; display: flex; align-items: center; padding: 0 12px 0 16px; }
.url { margin-left: 14px; font-size: 16.500px; letter-spacing: .09px; color: #fff; flex: 1; }
.url span { color: #9c9c9c; }
.omni-icons { display: flex; gap: 20px; }
.ext { display: flex; align-items: center; gap: 20px; padding-left: 17px; }
.ext svg:nth-child(5) { margin: 0 -3px; }
.bookmarks { height: 40px; display: grid; grid-template-columns: 132px 185px 184px 157px 180px 170px 190px 193px 341px 24px 1fr; align-items: center; padding: 0 0 5px 18px; background: linear-gradient(#0c0c0c, #040404 30%); font-size: 14px; letter-spacing: .03px; }
.bookmarks a { display: flex; align-items: center; gap: 10px; }
.more { color: #fff; font-size: 17px; line-height: 20px; padding-bottom: 4px; }
.bookmarks .others { border-left: 1px solid #444; padding-left: 13px; }

/* app header */
.qs-head { height: 44px; background: #262626; display: flex; align-items: center; padding-left: 25px; color: #fff; }
.brand { font-weight: 500; font-size: 21px; margin-left: 11px; width: 106px; letter-spacing: -.8px; }
.rule { width: 1px; height: 20px; margin: 0 15px 0 12px; background: #888; }
.qs-head h1 { font-size: 16.500px; margin-left: 6px; width: 417px; height: 34px; line-height: 33px; letter-spacing: -.18px; font-weight: 500; border-bottom: 1px solid #161616; }
.user { margin-left: auto; margin-right: 26px; }
.qs-bar { height: 55px; background: #19719a; color: #fff; display: flex; align-items: center; }
.add { width: 126px; height: 55px; display: flex; align-items: center; gap: 7px; padding: 0 0 1px 27px; background: none; border: 0; border-right: 1px solid #5293b2; color: #fff; font: 500 15px "Noto Sans", sans-serif; letter-spacing: .2px; }
.history { display: flex; gap: 14px; padding-left: 18px; }
.autosave { margin-left: auto; width: 129px; font-size: 15px; font-weight: 500; letter-spacing: .5px; padding-bottom: 2px; }
.bar-icons { display: flex; align-items: center; gap: 13px; width: 155px; height: 44px; border-left: 1px solid #3a86aa; padding-left: 18px; }

/* rail */
.app { height: 792px; display: grid; grid-template-columns: 97px 356px 1467px; }
.rail { border-right: 1px solid #e2e2e2; display: flex; flex-direction: column; }
.rail a { height: 96px; padding: 23px 0 0 1px; display: flex; flex-direction: column; align-items: center; gap: 7px; font-size: 16px; line-height: 24px; color: #3a3f42; position: relative; }
.rail .on { color: #19719a; gap: 6px; }
.notch { position: absolute; right: -1px; top: 36px; }
.rail a:last-child { margin-top: 24px; }

/* data panel */
.panel { display: flex; flex-direction: column; min-width: 0; }
.panel-top { padding: 14px 15px 0 17px; height: 187px; }
h2 { font-size: 17.500px; line-height: 24px; color: #444; }
.row-head { display: flex; justify-content: space-between; align-items: flex-start; padding-right: 9px; height: 28px; color: #555; }
.row-head svg { margin-top: -3px; }
.row-data { display: flex; align-items: center; gap: 12px; }
.select { width: 269px; height: 45px; border: 1px solid #c6c6c6; border-radius: 2px; background: #eee; display: flex; align-items: center; padding: 0 8px 5px 7px; font-size: 17.500px; color: #444; }
.select svg { margin-top: 5px; }
.select b { width: 53px; height: 25px; line-height: 24px; background: #ff9900; color: #fff; border-radius: 3px; text-align: center; font-size: 14px; letter-spacing: -.2px; }
.select span { flex: 1; margin: 3px 0 0 5px; letter-spacing: .4px; }
.row-data em { font-style: normal; font-size: 16.500px; color: #666; padding-bottom: 2px; }
.fl { margin-top: 16px; }
.search { margin-top: 6px; width: 324px; height: 41px; border: 1px solid #c6c6c6; border-radius: 2px; display: flex; align-items: center; justify-content: space-between; padding: 0 12px 0 14px; color: #999; font-style: italic; font-size: 17.500px; }
.search span { letter-spacing: .05px; }
.search svg { margin-top: -4px; }
.fields { height: 305px; display: flex; padding-left: 15px; overflow: hidden; border-bottom: 1px solid #c8c8c8; }
.fields ul { width: 305px; list-style: none; padding-top: 1px; }
.fields li { height: 33px; margin-bottom: 2.750px; border-radius: 3px; padding: 0 0 2px 8px; display: flex; align-items: center; gap: 13px; font-size: 16px; letter-spacing: -.1px; color: #666; }
.fields li svg { color: #219fd7; margin-top: 1px; }
.fields li svg.g { color: #2ead00; }
.dim { background: #d2eaf7; }
.mea { background: #d5eecb; }
.vscroll { width: 21px; background: #f1f1f1; display: flex; flex-direction: column; align-items: center; padding: 9px 0 9px; }
.vscroll i { width: 17px; height: 117px; background: #c1c1c1; margin: 6px 0 auto; }
.vt-head { height: 53px; display: flex; align-items: center; justify-content: space-between; padding: 0 26px 0 17px; }
.vt-head h2 { color: #222; letter-spacing: .3px; }
.types { display: grid; grid-template-columns: repeat(7, 46.800px); grid-auto-rows: 46.800px; padding-left: 14.500px; }
.types span { display: grid; place-items: center; }
.types .picked { width: 41px; height: 42px; margin: 2px 3px; background: #d2eaf7; border: 2px solid #219fd7; }

/* stage */
.stage { display: flex; flex-direction: column; min-width: 0; }
.wells { height: 186px; background: #f5f5f5; border-bottom: 1px solid #c8c8c8; padding: 16px 16px 0 14px; }
.wells h2 { color: #666; font-size: 17px; letter-spacing: .75px; }
.wells-head { display: flex; justify-content: space-between; align-items: center; }
.wells-head svg { margin-top: 4px; }
.wells-row { display: flex; gap: 28px; padding: 29px 0 0 14px; }
.well { width: 357px; height: 88px; background: #fff; border: 2px solid #219fd7; border-radius: 3px; padding: 4px 6px 0 7px; color: #219fd7; }
.well label { display: block; font-size: 13px; font-weight: 600; color: #666; line-height: 20px; height: 29px; }
.well p { height: 43px; border-radius: 2px; background: #219fd7; color: #fff; font-size: 16px; font-weight: 500; display: flex; align-items: center; justify-content: space-between; padding: 0 12px 3px 8px; }
.well p svg { margin-top: 2px; }
.well.green { border-color: #2ead00; }
.green p { background: #2ead00; }
.sheets { height: 52px; border-bottom: 1px solid #dedede; display: flex; align-items: flex-end; padding-left: 7px; color: #888; }
.sheet { width: 113px; height: 45px; margin-bottom: -1px; background: #f5f5f5; border: 1px solid #d6d6d6; border-bottom: 0; display: flex; align-items: center; justify-content: space-between; padding: 0 3px 1px 14px; }
.sheet b { color: #222; font-size: 17px; letter-spacing: .1px; }
.sheets > svg { margin: 0 0 13px 13px; }
.board-wrap { height: 554px; background: #f5f5f5; display: grid; grid-template: 544px 10px / 1456px 11px; }
.board { overflow: hidden; display: grid; grid-template: 353px 200px / 658px 780px; gap: 11px; padding-top: 10px; align-content: start; }
.visual { background: #fff; border: 2px solid #e2e2e2; position: relative; }
.left { border-left: 0; margin-top: 1px; }
.selected { border-color: #222; }
.visual h3 { height: 52px; padding: 20px 0 0 11px; font-size: 18px; letter-spacing: .4px; line-height: 26px; color: #222; }
.left h3 { height: 51px; padding: 19px 0 0 1px; }
.ticks { font-size: 13.700px; text-anchor: end; fill: #555; }
.cats { font-size: 13.600px; text-anchor: end; fill: #555; }
.vals { font-size: 13.800px; text-anchor: middle; fill: #555; }
.lg-title { font-size: 18px; letter-spacing: .4px; fill: #333; }
.lg { font-size: 16.500px; fill: #777; }
.tools { position: absolute; right: 6px; top: 6px; width: 90px; height: 33px; background: #fff; border: 1px solid #444; border-radius: 5px; box-shadow: 0 3px 6px #0005; display: flex; align-items: center; gap: 9px; padding-left: 6px; color: #222; }
.tools svg:first-child { margin-top: -5px; }
.tools svg:last-child { margin-left: 2px; }
.h { position: absolute; width: 8px; height: 8px; background: #fff; border: 1px solid #000; }
.tl, .tc, .tr { top: -5px; } .bl, .bc, .br { bottom: -5px; } .ml, .mr { top: 171px; }
.tl, .ml, .bl { left: -5px; } .tr, .mr, .br { right: -5px; } .tc, .bc { left: 384px; }
.empty { display: flex; justify-content: center; padding-top: 162px; color: #222; font-size: 16px; letter-spacing: -.8px; }
.empty p { font-weight: 700; }
.left.empty { padding-right: 120px; margin-top: 0; }
.side i { display: block; width: 11px; height: 339px; border-radius: 5px; background: #a3a3a3; }
.foot { grid-column: 1 / 3; }
.foot i { display: block; margin-left: 88px; width: 968px; height: 10px; border-radius: 5px; background: #a3a3a3; }

/* taskbar */
.taskbar { height: 60px; display: flex; align-items: center; border-top: 1px solid #4b4140; font-family: "Open Sans", "Noto Sans", sans-serif; color: #fff; background: linear-gradient(90deg, #272d22, #38201f 8%, #431a15 15%, #43181a 21%, #371f17 29%, #342115 38%, #40190f 59%, #352413 65%, #3e1f12 68%, #31202a 75%, #2c1b1d 84%, #25242a 96%, #201c1e); }
.start { margin-left: 26px; }
.tb-search { margin-left: 17px; width: 275px; height: 40px; border-radius: 20px; background: #ffffff22; border: 1px solid #ffffff28; display: flex; align-items: center; padding: 0 6px 0 14px; }
.tb-search span { flex: 1; margin-left: 11px; font-size: 16.500px; letter-spacing: -.2px; color: #ddd; }
.apps { display: flex; margin-left: 2px; }
.apps span { width: 55px; height: 50px; display: grid; place-items: center; position: relative; }
.cur { background: linear-gradient(90deg, transparent 3px, #ffffff14 3px 52px, transparent 52px); }
.cur::after, .run::after { content: ""; position: absolute; bottom: 1px; width: 8px; height: 4px; border-radius: 2px; background: #a29a98; }
.cur::after { width: 20px; background: #4cc2ff; }
.tray { margin-left: auto; display: flex; align-items: center; padding-right: 25px; }
.tray svg:nth-child(2) { margin-left: 23px; }
.tray svg:nth-child(3) { margin-left: 9px; }
.tray svg:nth-child(4) { margin-left: 11px; }
.tray p { width: 97px; text-align: right; font-size: 14.500px; line-height: 20px; letter-spacing: .05px; padding-bottom: 2px; }
.tray b { width: 20px; height: 20px; margin-left: 9px; border-radius: 50%; background: #4cc2ff; color: #111; font-size: 12px; font-weight: 400; line-height: 20px; text-align: center; }
```
